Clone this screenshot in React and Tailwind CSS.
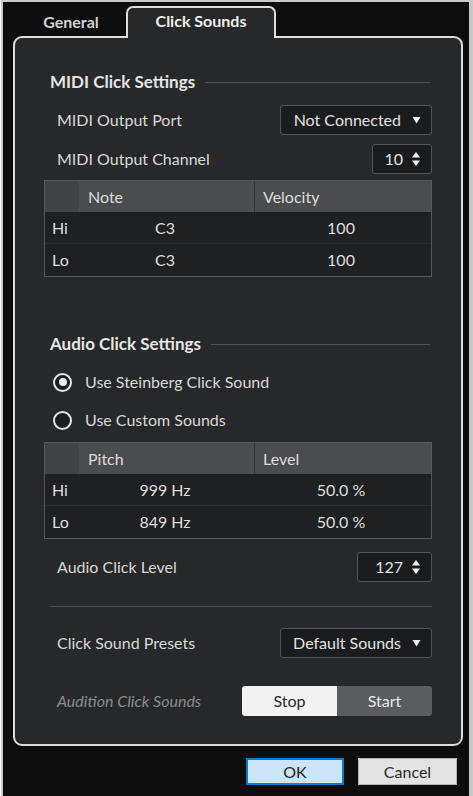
import React from "react";

const font = { fontFamily: 'Lato, "Noto Sans", sans-serif' };

const Caret = () => (
  <svg width="9" height="8" viewBox="0 0 9 8" className="shrink-0">
    <path d="M0.5 1 H8.5 L4.5 7.5 Z" fill="#f2f2f2" />
  </svg>
);

const Spin = () => (
  <svg width="10" height="16" viewBox="0 0 10 16" className="shrink-0">
    <path d="M1 6.5 L5 1 L9 6.5 Z" fill="#f2f2f2" />
    <path d="M1 9.5 L5 15 L9 9.5 Z" fill="#f2f2f2" />
  </svg>
);

const SectionHead = ({ title }) => (
  <div className="flex items-center h-[24px] pl-[6px]">
    <span className="text-[17px] font-bold text-[#e6e6e6] whitespace-nowrap">{title}</span>
    <div className="flex-1 h-px bg-[#505153] ml-[10px] mr-[2px]" />
  </div>
);

const Dropdown = ({ value }) => (
  <div className="w-[152px] h-[30px] flex items-center justify-end gap-[11px] pr-[10px] bg-[#1b1c1e] border border-[#535456] rounded-[3px]">
    <span className="text-[16px] text-[#e2e2e2]">{value}</span>
    <Caret />
  </div>
);

const SpinBox = ({ value, width }) => (
  <div className={"h-[30px] flex items-center justify-end gap-[8px] pr-[10px] bg-[#1b1c1e] border border-[#535456] rounded-[3px] " + width}>
    <span className="text-[16px] text-[#e2e2e2]">{value}</span>
    <Spin />
  </div>
);

const Row = ({ label, children, italic }) => (
  <div className="flex items-center justify-between h-[30px]">
    <span
      className={
        "pl-[13px] text-[16px] " +
        (italic ? "italic text-[#8a8b8d]" : "text-[#d8d8d8]")
      }
    >
      {label}
    </span>
    {children}
  </div>
);

const DataTable = ({ cols, rows }) => (
  <div className="border border-[#56575a] bg-[#1f2022]">
    <div className="flex h-[31px] bg-[#4b4c4f] text-[16px] text-[#dcdcdc]">
      <div className="w-[34px] bg-[#424346]" />
      <div className="w-[176px] flex items-center pl-[9px] border-r border-[#333436]">{cols[0]}</div>
      <div className="flex-1 flex items-center pl-[8px]">{cols[1]}</div>
    </div>
    {rows.map((r, i) => (
      <div
        key={i}
        className={
          "flex h-[32px] items-center text-[16px] text-[#dedede] " +
          (i === 0 ? "border-b border-[#2d2e30]" : "")
        }
      >
        <div className="w-[34px] pl-[7px]">{r[0]}</div>
        <div className="w-[172px] text-center">{r[1]}</div>
        <div className="flex-1 text-center">{r[2]}</div>
      </div>
    ))}
  </div>
);

const Radio = ({ label, checked }) => (
  <div className="flex items-center h-[30px] pl-[9px] gap-[13px]">
    <div className="w-[19px] h-[19px] rounded-full border-2 border-[#e4e4e4] bg-[#1c1d1f] flex items-center justify-center">
      {checked && <div className="w-[8px] h-[8px] rounded-full bg-[#ececec]" />}
    </div>
    <span className="text-[16px] text-[#d8d8d8]">{label}</span>
  </div>
);

export default function App() {
  return (
    <div
      className="w-[473px] h-[796px] bg-[#0d0d0e] border-l-[2px] border-t-[2px] border-r-[5px] border-[#c9c9c9] ml-[1px] overflow-hidden"
      style={font}
    >
      <div className="flex items-end h-[34px] pl-[13px]">
        <div className="w-[110px] h-[28px] flex items-center justify-center text-[16px] font-bold text-[#d2d2d2]">
          General
        </div>
        <div className="relative z-10 w-[150px] h-[32px] -mb-[2px] bg-[#27282a] border-2 border-b-0 border-[#dcdcdc] rounded-t-[7px] flex items-center justify-center text-[16px] font-bold text-[#f0f0f0] pb-[5px]">
          Click Sounds
        </div>
      </div>

      <div className="ml-[10px] w-[450px] h-[710px] bg-[#27282a] border-2 border-[#dcdcdc] rounded-[9px] pl-[29px] pr-[29px] flex flex-col">
        <div className="mt-[32px]">
          <SectionHead title="MIDI Click Settings" />
        </div>
        <div className="mt-[11px]">
          <Row label="MIDI Output Port">
            <Dropdown value="Not Connected" />
          </Row>
        </div>
        <div className="mt-[9px]">
          <Row label="MIDI Output Channel">
            <SpinBox value="10" width="w-[60px]" />
          </Row>
        </div>
        <div className="mt-[6px]">
          <DataTable
            cols={["Note", "Velocity"]}
            rows={[
              ["Hi", "C3", "100"],
              ["Lo", "C3", "100"],
            ]}
          />
        </div>

        <div className="mt-[55px]">
          <SectionHead title="Audio Click Settings" />
        </div>
        <div className="mt-[11px]">
          <Radio label="Use Steinberg Click Sound" checked />
        </div>
        <div className="mt-[8px]">
          <Radio label="Use Custom Sounds" />
        </div>
        <div className="mt-[7px]">
          <DataTable
            cols={["Pitch", "Level"]}
            rows={[
              ["Hi", "999 Hz", "50.0 %"],
              ["Lo", "849 Hz", "50.0 %"],
            ]}
          />
        </div>
        <div className="mt-[13px]">
          <Row label="Audio Click Level">
            <SpinBox value="127" width="w-[75px]" />
          </Row>
        </div>
        <div className="mt-[24px] h-px bg-[#4a4b4d] ml-[6px]" />
        <div className="mt-[21px]">
          <Row label="Click Sound Presets">
            <Dropdown value="Default Sounds" />
          </Row>
        </div>
        <div className="mt-[28px]">
          <Row label="Audition Click Sounds" italic>
            <div className="flex w-[190px] h-[30px] rounded-[3px] overflow-hidden text-[16px]">
              <div className="flex-1 bg-[#f3f3f3] text-[#2a2a2a] flex items-center justify-center">Stop</div>
              <div className="flex-1 bg-[#5b5c5f] text-[#e8e8e8] flex items-center justify-center">Start</div>
            </div>
          </Row>
        </div>
      </div>

      <div className="flex justify-end gap-[14px] pr-[12px] mt-[12px] text-[16px]">
        <button className="w-[98px] h-[27px] bg-[#cce4f7] border-2 border-[#0a78d4] text-[#1e1e1e] flex items-center justify-center">
          OK
        </button>
        <button className="w-[99px] h-[27px] bg-[#e3e3e3] border border-[#b5b5b5] text-[#2a2a2a] flex items-center justify-center">
          Cancel
        </button>
      </div>
    </div>
  );
}
